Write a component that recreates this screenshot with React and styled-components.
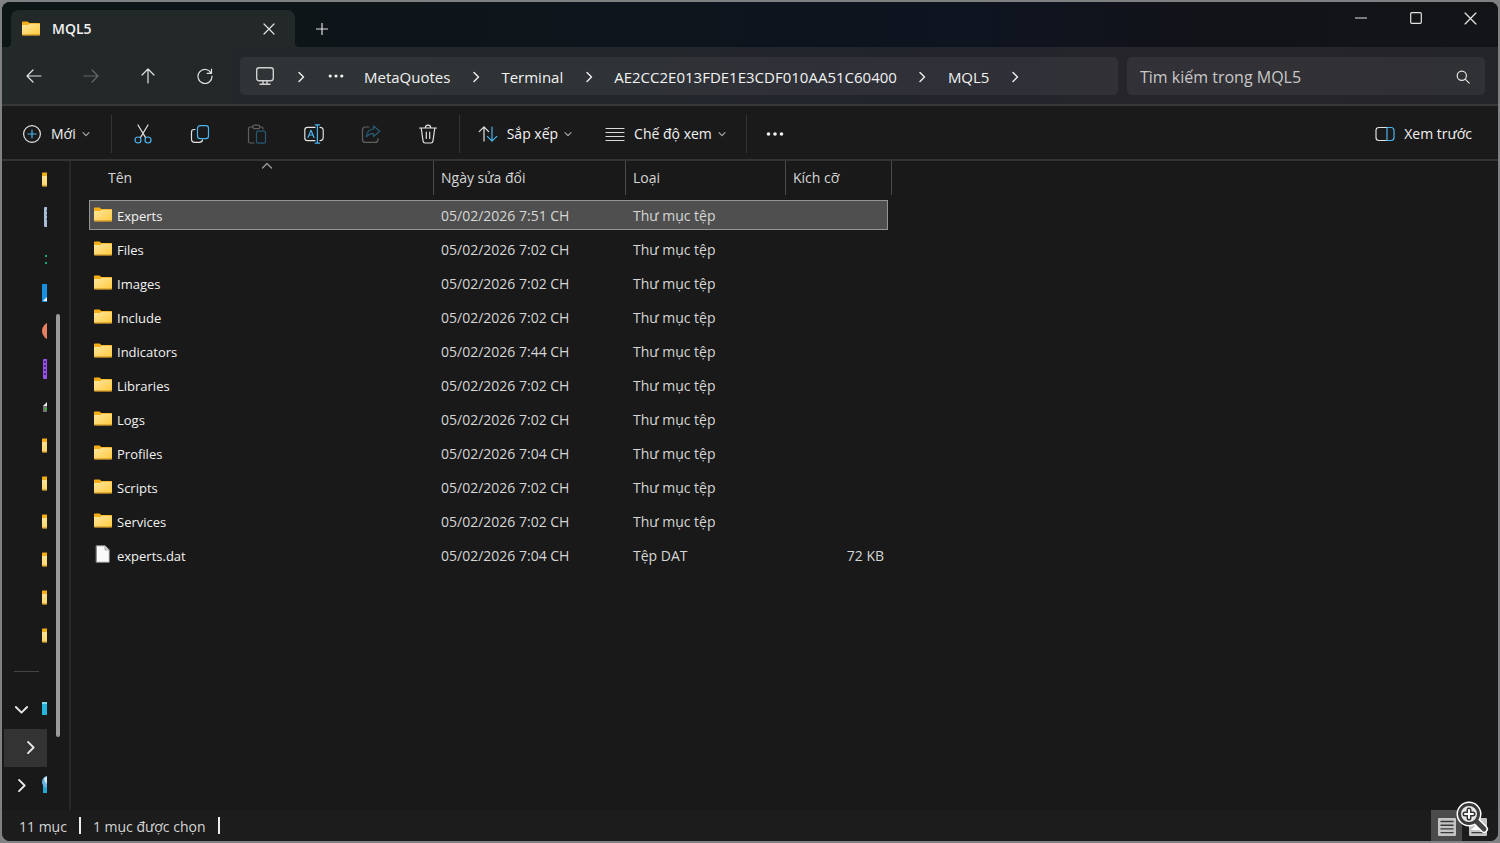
import { Fragment } from "react";
import styled, { createGlobalStyle } from "styled-components";

const BLUE = "#4cb4ee";

const GlobalStyle = createGlobalStyle`
  * {
    box-sizing: border-box;
  }
  body {
    margin: 0;
    background: #808182;
    color: #f2f2f2;
    font-family: "Open Sans", "Noto Sans", sans-serif;
    font-size: 14px;
    line-height: 20px;
  }
  button,
  input {
    font: inherit;
    color: inherit;
    border: 0;
    padding: 0;
    background: none;
  }
  svg {
    display: block;
    flex: none;
  }
`;

const Desktop = styled.div`
  height: 100vh;
  padding: 2px;
`;
const Window = styled.div`
  height: 100%;
  display: flex;
  flex-flow: column nowrap;
  overflow: hidden;
  border-radius: 8px;
  background: #191919;
`;

const TitleBar = styled.header`
  display: flex;
  height: 45px;
  padding-left: 9px;
  background: linear-gradient(90deg, #0e1517 0%, #0e151a 30%, #0e1420 65%, #121319 80%, #131417 100%);
`;
const Tab = styled.div`
  position: relative;
  display: flex;
  align-items: center;
  width: 284px;
  margin-top: 8px;
  padding: 0 20px 0 11px;
  gap: 12px;
  border-radius: 8px 8px 0 0;
  background: #232829;
  font-weight: 600;

  &::before,
  &::after {
    content: "";
    position: absolute;
    bottom: 0;
    width: 4px;
    height: 4px;
  }
  &::before {
    left: -4px;
    background: radial-gradient(circle at 0 0, transparent 4px, #232829 4px);
  }
  &::after {
    right: -4px;
    background: radial-gradient(circle at 100% 0, transparent 4px, #232829 4px);
  }
`;
const TabName = styled.span`
  flex: 1;
`;
const NewTab = styled.button`
  display: grid;
  place-items: center;
  width: 40px;
  margin: 8px 0 0 7px;
`;
const WindowButtons = styled.div`
  display: flex;
  margin-left: auto;
`;
const WindowButton = styled.button`
  display: grid;
  place-items: center;
  width: 55px;
  height: 32px;
`;

const NavBar = styled.nav`
  display: flex;
  align-items: center;
  height: 59px;
  padding: 0 13px 0 12px;
  border-bottom: 2px solid #373737;
  background: linear-gradient(90deg, #232829 0%, #23272a 35%, #22242c 60%, #26252b 78%, #242528 100%);
`;
const IconGroup = styled.div`
  display: flex;
  gap: 17px;
  margin-right: ${(props) => props.$end}px;
`;
const IconButton = styled.button`
  display: grid;
  place-items: center;
  width: 40px;
  height: 38px;
`;
const Address = styled.div`
  flex: 1;
  display: flex;
  align-items: center;
  min-width: 0;
  height: 38px;
  padding-left: 15px;
  border-radius: 5px;
  background: rgba(255, 255, 255, 0.06);
  font-size: 15px;
  white-space: nowrap;
`;
const Crumb = styled.a`
  padding-top: 2px;
  color: inherit;
  text-decoration: none;
`;
const CrumbArrow = styled.span`
  display: grid;
  place-items: center;
  width: 51px;
  padding-top: 2px;
`;
const MoreCrumbs = styled.button`
  display: grid;
  place-items: center;
  width: 20px;
  margin-right: 18px;
`;
const Search = styled.label`
  display: flex;
  align-items: center;
  width: 358px;
  height: 38px;
  margin-left: 9px;
  padding: 2px 14px 0 13px;
  border-radius: 5px;
  background: rgba(255, 255, 255, 0.06);
`;
const SearchInput = styled.input`
  flex: 1;
  min-width: 0;
  font-size: 16px;
  outline: none;

  &::placeholder {
    color: #c8c8c8;
    opacity: 1;
  }
`;

const Toolbar = styled.div`
  display: flex;
  align-items: center;
  height: 55px;
  padding: 2px 26px 0 20px;
  border-bottom: 2px solid #343434;
  background: #1a1a1a;
`;
const ToolButton = styled.button`
  display: flex;
  align-items: center;
  gap: 9px;
  height: 38px;
  margin-left: ${(props) => props.$start || 0}px;
  white-space: nowrap;
`;
const ToolLabel = styled.span`
  display: flex;
  align-items: center;
  gap: 6px;
`;
const Divider = styled.span`
  width: 1px;
  height: 38px;
  margin: 0 ${(props) => props.$after}px 0 ${(props) => props.$before}px;
  background: #343434;
`;
const Preview = styled(ToolButton)`
  margin-left: auto;
`;

const Body = styled.div`
  flex: 1;
  display: flex;
  min-height: 0;
`;
const Sidebar = styled.aside`
  display: flex;
  width: 69px;
  border-right: 2px solid #282828;
  overflow: hidden;
`;
const Places = styled.ul`
  width: 45px;
  margin: 0;
  padding: 0 0 0 2px;
  list-style: none;
  overflow: hidden;
`;
const Place = styled.li`
  display: flex;
  align-items: center;
  height: 38px;
  padding: 0 0 2px ${(props) => (props.$arrow ? 10 : 38)}px;
  gap: 13px;
  background: ${(props) => (props.$active ? "#333333" : "transparent")};
`;
const NestedArrow = styled.span`
  padding-left: 9px;
`;
const PlaceRule = styled.li`
  height: 36px;
  padding: 16px 8px 0 10px;

  &::before {
    content: "";
    display: block;
    height: 1px;
    background: #444444;
  }
`;
const ScrollTrack = styled.div`
  display: flex;
  flex-flow: column nowrap;
  width: 4px;
  margin-left: 9px;

  &::before {
    content: "";
    flex: 153;
  }
  &::after {
    content: "";
    flex: 73;
  }
`;
const ScrollThumb = styled.div`
  flex: 424;
  border-radius: 2px;
  background: #9b9b9b;
`;

const Files = styled.main`
  flex: 1;
  padding-left: 18px;
`;
const Table = styled.table`
  display: block;
`;
const TableHead = styled.thead`
  display: block;
  margin-bottom: 5px;
`;
const TableBody = styled.tbody`
  display: grid;
  gap: 4px;
`;
const HeadRow = styled.tr`
  display: grid;
  grid-template-columns: 345px 192px 160px 106px;
`;
const HeadCell = styled.th`
  position: relative;
  height: 34px;
  padding: 7px 0 0 ${(props) => props.$indent || 7}px;
  border-right: 1px solid #4a4a4a;
  color: #d6d6d6;
  font-weight: 400;
  text-align: left;
`;
const SortMark = styled.span`
  position: absolute;
  top: -1px;
  left: 50%;
`;
const Row = styled.tr`
  display: grid;
  grid-template-columns: 345px 192px 160px 102px;
  align-items: center;
  width: 799px;
  height: 30px;
  background: ${(props) => (props.$selected ? "#4f4f4f" : "transparent")};
  box-shadow: ${(props) => (props.$selected ? "inset 0 0 0 1px #949494" : "none")};
`;
const Cell = styled.td`
  padding: 2px 4px 0 7px;
  color: #d6d6d6;
  text-align: ${(props) => props.$align || "left"};
`;
const NameCell = styled.td`
  display: flex;
  align-items: center;
  gap: 5px;
  padding: 0 0 2px 5px;
`;
const FileName = styled.span`
  padding-top: 4px;
  font-size: 13px;
`;

const StatusBar = styled.footer`
  display: flex;
  align-items: center;
  height: 31px;
  padding-left: 17px;
  gap: 12px;
  background: #1c1c1c;
  color: #d6d6d6;
`;
const StatusText = styled.span`
  padding-top: 2px;
`;
const StatusRule = styled.span`
  width: 2px;
  height: 17px;
  background: #ededed;
`;
const ViewModes = styled.div`
  position: relative;
  display: flex;
  margin-left: auto;
  padding-right: 5px;
  height: 100%;
`;
const ViewMode = styled.button`
  display: grid;
  place-items: center;
  width: 31px;
  padding-top: 2px;
  background: ${(props) => (props.$active ? "#4b4b4b" : "transparent")};
`;
const Magnifier = styled.span`
  position: absolute;
  right: 9px;
  bottom: 7px;
`;

function Svg({ w = 20, h = w, box, color = "#e2e2e2", width = 1.2, children }) {
  return (
    <svg
      width={w}
      height={h}
      viewBox={box || `0 0 ${w} ${h}`}
      fill="none"
      stroke={color}
      strokeWidth={width}
      strokeLinecap="round"
      strokeLinejoin="round"
      aria-hidden="true"
    >
      {children}
    </svg>
  );
}

function Folder() {
  return (
    <Svg w={18} h={15} width={0}>
      <defs>
        <linearGradient id="folder" x1="0" y1="0" x2="1" y2="1">
          <stop offset="0" stopColor="#ffe7a0" />
          <stop offset="1" stopColor="#ffca3e" />
        </linearGradient>
      </defs>
      <path d="M0 1.2Q0 .5.8.5H5.5L7.3 2H17.3Q18 2 18 2.8V8H0Z" fill="#f5ae16" />
      <path d="M0 4.1H6L7.6 2.7H18V13.6Q18 14.2 17.3 14.2H.7Q0 14.2 0 13.6Z" fill="url(#folder)" />
      <path d="M0 13.3H18V13.7Q18 14.4 17.3 14.4H.7Q0 14.4 0 13.7Z" fill="#dda02a" />
    </Svg>
  );
}

function DataFile() {
  return (
    <Svg w={18} h={18} color="#9a9a9a" width={0.8}>
      <path d="M2.5.8H11L15.2 5V17.2H2.5Z" fill="#fafafa" />
      <path d="M11 .8V5H15.2" fill="#d7d7d7" />
    </Svg>
  );
}

function Chevron({ dir = "right", size = 12, color = "#e8e8e8", width = 1.5 }) {
  const paths = {
    right: "M4 1.5 8.5 6 4 10.5",
    down: "M1.5 4 6 8.5 10.5 4",
    up: "M1.5 8 6 3.5 10.5 8",
  };
  return (
    <Svg w={size} box="0 0 12 12" color={color} width={width}>
      <path d={paths[dir]} />
    </Svg>
  );
}

const SmallChevron = () => <Chevron dir="down" size={8} color="#b0b0b0" width={1.6} />;

const Arrow = ({ turn = 0, color }) => (
  <Svg w={18} color={color}>
    <path d="M2 9H16M8 3 2 9 8 15" transform={`rotate(${turn} 9 9)`} />
  </Svg>
);

const Cross = ({ size = 12 }) => (
  <Svg w={size} box="0 0 12 12">
    <path d="M1 1 11 11M11 1 1 11" />
  </Svg>
);

const Dots = ({ w = 16 }) => (
  <Svg w={w} h={6} box="0 0 18 6" color="none">
    {[2.5, 9, 15.5].map((x) => (
      <circle key={x} cx={x} cy="3" r="1.8" fill="#f2f2f2" />
    ))}
  </Svg>
);

const editTools = [
  {
    name: "Cắt",
    icon: (
      <>
        <path d="M5 1 12.6 13.6M15 1 7.4 13.6" />
        <circle cx="5" cy="16" r="3" stroke={BLUE} />
        <circle cx="15" cy="16" r="3" stroke={BLUE} />
      </>
    ),
  },
  {
    name: "Sao chép",
    icon: (
      <>
        <path d="M5 5.5H4Q1.5 5.5 1.5 8V15Q1.5 18.3 4.8 18.3H9.5Q12 18.3 12.5 16" />
        <rect x="7.5" y="1.6" width="11" height="13" rx="2.6" stroke={BLUE} />
      </>
    ),
  },
  {
    name: "Dán",
    icon: (
      <>
        <g stroke="#606060">
          <path d="M6 3H3Q1.5 3 1.5 4.5V17.5Q1.5 19 3 19H7M13 3H14.5Q16 3 16 4.5V5" />
          <rect x="5.8" y="1.2" width="7" height="3.4" rx="1.6" />
        </g>
        <rect x="9.5" y="7.2" width="9" height="12" rx="1.6" stroke="#275b75" />
      </>
    ),
  },
  {
    name: "Đổi tên",
    icon: (
      <>
        <path d="M11 3.4H3.5Q.8 3.4.8 6V14Q.8 16.6 3.5 16.6H11M16 3.4Q19.2 3.4 19.2 6.4V13.6Q19.2 16.6 16 16.6" />
        <path d="M4 13.5 7 6.2 10 13.5M5 11H9M13.4 1V19M11.2.8H15.6M11.2 19.2H15.6" stroke={BLUE} />
      </>
    ),
  },
  {
    name: "Chia sẻ",
    icon: (
      <>
        <path
          d="M8 3H4.5Q1.5 3 1.5 6V15.4Q1.5 18.4 4.5 18.4H14Q17 18.4 17 15.4V14.5"
          stroke="#606060"
        />
        <path d="M12.5 2 18.8 7.2 12.5 12.5V9.6Q8 9.4 5.4 12.8 6.2 5.5 12.5 5Z" stroke="#275b75" />
      </>
    ),
  },
  {
    name: "Xóa",
    icon: (
      <>
        <path d="M1.5 4H18.5M3.2 4 5 16.8Q5.3 19 7.2 19H12.8Q14.7 19 15 16.8L16.8 4M7.3 4Q7.3 1.2 10 1.2T12.7 4" />
        <path d="M8.3 8V14.5M11.7 8V14.5" />
      </>
    ),
  },
];

// Quick access icons, only their left edge shows in the collapsed pane
const placeIcons = [
  <Folder />,
  <Svg w={18} h={20} width={0}>
    <rect x="2" width="14" height="20" rx="1" fill="#a9bdd6" />
    <path d="M4 3H5V5H4ZM4 7H5V9H4ZM4 11H5V13H4Z" fill="#6f87a5" />
  </Svg>,
  <Svg w={18} h={18} width={0}>
    <path d="M3 9H5V11H3ZM3 16H5V18H3Z" fill="#19a877" />
  </Svg>,
  <Svg w={18} h={18} width={0}>
    <rect width="18" height="18" rx="1" fill="#1591df" />
    <path d="M1 17 9 9 17 17Z" fill="#f4f8fb" />
  </Svg>,
  <Svg w={18} h={18} width={0}>
    <circle cx="9" cy="9" r="9" fill="#e9805f" />
  </Svg>,
  <Svg w={18} h={20} width={0}>
    <rect x="1" width="17" height="20" rx="1" fill="#9553e8" />
    <path d="M2 2H4V4H2ZM2 6H4V8H2ZM2 10H4V12H2ZM2 14H4V16H2Z" fill="#4d2390" />
  </Svg>,
  <Svg w={18} h={12} width={0}>
    <path d="M1 5 6 0V5Z" fill="#ececec" />
    <path d="M1 5H18V11H1Z" fill="#737373" />
    <path d="M3 7H5V9H3Z" fill="#23c52b" />
  </Svg>,
  <Folder />,
  <Folder />,
  <Folder />,
  <Folder />,
  <Folder />,
  <Folder />,
];

const path = ["MetaQuotes", "Terminal", "AE2CC2E013FDE1E3CDF010AA51C60400", "MQL5"];

const files = [
  { name: "Experts", date: "05/02/2026 7:51 CH", selected: true },
  { name: "Files", date: "05/02/2026 7:02 CH" },
  { name: "Images", date: "05/02/2026 7:02 CH" },
  { name: "Include", date: "05/02/2026 7:02 CH" },
  { name: "Indicators", date: "05/02/2026 7:44 CH" },
  { name: "Libraries", date: "05/02/2026 7:02 CH" },
  { name: "Logs", date: "05/02/2026 7:02 CH" },
  { name: "Profiles", date: "05/02/2026 7:04 CH" },
  { name: "Scripts", date: "05/02/2026 7:02 CH" },
  { name: "Services", date: "05/02/2026 7:02 CH" },
  { name: "experts.dat", date: "05/02/2026 7:04 CH", type: "Tệp DAT", size: "72 KB" },
];

function Title() {
  return (
    <TitleBar>
      <Tab>
        <Folder />
        <TabName>MQL5</TabName>
        <button aria-label="Đóng tab">
          <Cross />
        </button>
      </Tab>
      <NewTab aria-label="Tab mới">
        <Svg w={12}>
          <path d="M6 .5V11.5M.5 6H11.5" />
        </Svg>
      </NewTab>
      <WindowButtons>
        <WindowButton aria-label="Thu nhỏ">
          <Svg w={12}>
            <path d="M.5 6H11.5" />
          </Svg>
        </WindowButton>
        <WindowButton aria-label="Phóng to">
          <Svg w={12}>
            <rect x=".7" y=".7" width="10.6" height="10.6" rx="1" />
          </Svg>
        </WindowButton>
        <WindowButton aria-label="Đóng">
          <Cross size={13} />
        </WindowButton>
      </WindowButtons>
    </TitleBar>
  );
}

function Navigation() {
  return (
    <NavBar>
      <IconGroup $end={15}>
        <IconButton aria-label="Quay lại">
          <Arrow />
        </IconButton>
        <IconButton aria-label="Tiến">
          <Arrow turn={180} color="#646768" />
        </IconButton>
        <IconButton aria-label="Lên">
          <Arrow turn={90} />
        </IconButton>
        <IconButton aria-label="Làm mới">
          <Svg w={16}>
            <path d="M14.2 5.2A7 7 0 1 0 15 8M14.5 1V5.3H10.2" />
          </Svg>
        </IconButton>
      </IconGroup>
      <Address>
        <Svg w={20} color="#d0d0d0" width={1.4}>
          <rect x="1.7" y="1.7" width="16.6" height="13" rx="2.4" />
          <path d="M8 15V18M12 15V18M5 18.2H15" />
        </Svg>
        <CrumbArrow>
          <Chevron />
        </CrumbArrow>
        <MoreCrumbs aria-label="Thư mục khác">
          <Dots />
        </MoreCrumbs>
        {path.map((folder) => (
          <Fragment key={folder}>
            <Crumb href="#">{folder}</Crumb>
            <CrumbArrow>
              <Chevron />
            </CrumbArrow>
          </Fragment>
        ))}
      </Address>
      <Search>
        <SearchInput placeholder="Tìm kiếm trong MQL5" aria-label="Tìm kiếm trong MQL5" />
        <Svg w={16}>
          <circle cx="6.8" cy="6.8" r="4.6" />
          <path d="M10.2 10.2 14.2 14.2" />
        </Svg>
      </Search>
    </NavBar>
  );
}

function Tools() {
  return (
    <Toolbar>
      <ToolButton>
        <Svg w={20}>
          <circle cx="10" cy="10" r="8.4" />
          <path d="M10 6V14M6 10H14" stroke={BLUE} />
        </Svg>
        <ToolLabel>
          Mới <SmallChevron />
        </ToolLabel>
      </ToolButton>
      <Divider $before={21} $after={11} />
      <IconGroup $end={0}>
        {editTools.map((tool) => (
          <IconButton key={tool.name} aria-label={tool.name}>
            <Svg w={20}>{tool.icon}</Svg>
          </IconButton>
        ))}
      </IconGroup>
      <Divider $before={11} $after={11} />
      <ToolButton $start={7}>
        <Svg w={20}>
          <path d="M6 17V3M1.2 7.6 6 2.8 10.6 7.6" />
          <path d="M14 3V17M9.4 12.4 14 17.2 18.8 12.4" stroke={BLUE} />
        </Svg>
        <ToolLabel>
          Sắp xếp <SmallChevron />
        </ToolLabel>
      </ToolButton>
      <ToolButton $start={33}>
        <Svg w={20} color="#d8d8d8">
          <path d="M1 4.5H19M1 8.5H19M1 12.5H19M1 16.5H19" />
        </Svg>
        <ToolLabel>
          Chế độ xem <SmallChevron />
        </ToolLabel>
      </ToolButton>
      <Divider $before={20} $after={18} />
      <ToolButton aria-label="Xem thêm">
        <Dots w={20} />
      </ToolButton>
      <Preview>
        <Svg w={20}>
          <path d="M12 3.5H4Q1 3.5 1 6.5V13.5Q1 16.5 4 16.5H12" />
          <path d="M12 3.5H16Q19 3.5 19 6.5V13.5Q19 16.5 16 16.5H12Z" stroke={BLUE} />
        </Svg>
        Xem trước
      </Preview>
    </Toolbar>
  );
}

function Pane() {
  return (
    <Sidebar>
      <Places>
        {placeIcons.map((icon, i) => (
          <Place key={i}>{icon}</Place>
        ))}
        <PlaceRule />
        <Place $arrow>
          <Chevron dir="down" size={15} />
          <Svg w={18} h={14} width={0}>
            <rect width="18" height="13" fill="#24b6da" />
            <path d="M0 0H18V2H0Z" fill="#7adcf0" />
          </Svg>
        </Place>
        <Place $arrow $active>
          <NestedArrow>
            <Chevron size={15} />
          </NestedArrow>
        </Place>
        <Place $arrow>
          <Chevron size={15} />
          <Svg w={18} h={18} width={0}>
            <rect x="1" y="6" width="16" height="11" fill="#23a9d2" />
            <circle cx="6" cy="6" r="6" fill="#64b5e6" />
            <path d="M2 2 6 0V9L3 6Z" fill="#d4edf8" />
          </Svg>
        </Place>
      </Places>
      <ScrollTrack>
        <ScrollThumb />
      </ScrollTrack>
    </Sidebar>
  );
}

function FileTable() {
  return (
    <Files>
      <Table>
        <TableHead>
          <HeadRow>
            <HeadCell $indent={19}>
              Tên
              <SortMark>
                <Chevron dir="up" size={12} color="#a0a0a0" width={1.2} />
              </SortMark>
            </HeadCell>
            <HeadCell>Ngày sửa đổi</HeadCell>
            <HeadCell>Loại</HeadCell>
            <HeadCell>Kích cỡ</HeadCell>
          </HeadRow>
        </TableHead>
        <TableBody>
          {files.map((file) => (
            <Row key={file.name} $selected={file.selected}>
              <NameCell>
                {file.type ? <DataFile /> : <Folder />}
                <FileName>{file.name}</FileName>
              </NameCell>
              <Cell>{file.date}</Cell>
              <Cell>{file.type || "Thư mục tệp"}</Cell>
              <Cell $align="right">{file.size}</Cell>
            </Row>
          ))}
        </TableBody>
      </Table>
    </Files>
  );
}

function Status() {
  return (
    <StatusBar>
      <StatusText>11 mục</StatusText>
      <StatusRule />
      <StatusText>1 mục được chọn</StatusText>
      <StatusRule />
      <ViewModes>
        <ViewMode $active aria-label="Chi tiết">
          <Svg w={20} color="#3a3a3a" width={1.4}>
            <rect x="1" y="1" width="18" height="18" rx="1" fill="#c4c4c4" stroke="none" />
            <path d="M4 4.5H16M4 8.2H16M4 11.9H16M4 15.6H16" />
          </Svg>
        </ViewMode>
        <ViewMode aria-label="Hình thu nhỏ lớn">
          <Svg w={20} color="#3a3a3a" width={1.4}>
            <rect x="1" y="1" width="18" height="18" rx="1" fill="#c4c4c4" stroke="none" />
            <path d="M3 13 8 8 14 13Z" fill="#ffffff" stroke="none" />
            <path d="M4 15.6H16" />
          </Svg>
        </ViewMode>
        <Magnifier>
          <Svg w={34} color="#ffffff" width={2}>
            <path d="M22 22 29 29" strokeWidth="8" />
            <circle cx="14" cy="14" r="10" strokeWidth="5" />
            <path d="M21 21 29 29" stroke="#444444" strokeWidth="5" />
            <circle cx="14" cy="14" r="9.5" fill="#e6e6e6" stroke="#3b3b3b" strokeWidth="3" />
            <path d="M14 10V18M10 14H18" stroke="#333333" strokeWidth="5" />
            <path d="M14 10V18M10 14H18" strokeWidth="2" />
          </Svg>
        </Magnifier>
      </ViewModes>
    </StatusBar>
  );
}

function App() {
  return (
    <>
      <GlobalStyle />
      <Desktop>
        <Window>
          <Title />
          <Navigation />
          <Tools />
          <Body>
            <Pane />
            <FileTable />
          </Body>
          <Status />
        </Window>
      </Desktop>
    </>
  );
}

export default App;
